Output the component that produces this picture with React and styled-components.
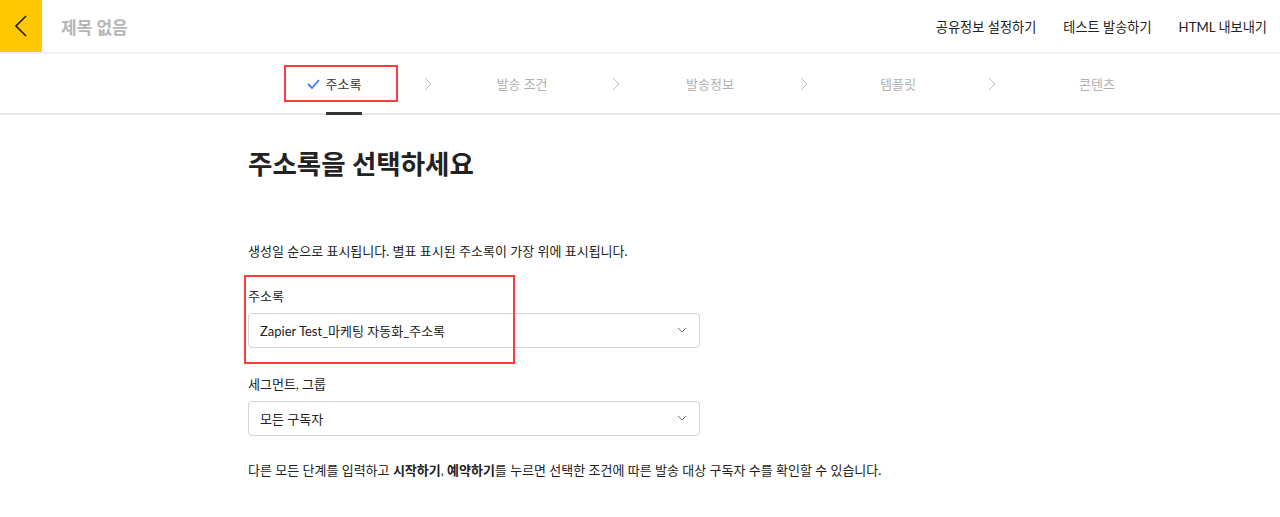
import React from 'react';
import styled, { createGlobalStyle } from 'styled-components';

const GlobalStyle = createGlobalStyle`
  body {
    margin: 0;
    background: #fff;
    font-family: Lato, "Noto Sans CJK KR", sans-serif;
    color: #222;
  }
`;

const Page = styled.div`
  width: 1280px;
  height: 517px;
  overflow: hidden;
  position: relative;
`;

const Header = styled.header`
  display: flex;
  align-items: center;
  height: 52px;
  border-bottom: 2px solid #f1f1f6;
`;

const BackButton = styled.div`
  width: 42px;
  height: 52px;
  background: #ffc800;
  display: flex;
  align-items: center;
  justify-content: center;
`;

const DocTitle = styled.div`
  margin-left: 19px;
  font-size: 17px;
  font-weight: 700;
  color: #b5b5b8;
  flex: 1;
`;

const HeaderLinks = styled.nav`
  display: flex;
  gap: 27px;
  padding-right: 13px;
  font-size: 13.2px;
  color: #222;
`;

const StepBar = styled.div`
  display: flex;
  align-items: stretch;
  height: 59px;
  padding-left: 249px;
  border-bottom: 2px solid #e8e8e8;
`;

const Step = styled.div`
  width: ${(p) => p.$w}px;
  display: flex;
  align-items: center;
  justify-content: center;
  gap: 6px;
  font-size: 13px;
  color: ${(p) => (p.$active ? '#333' : '#b0b0b3')};
  position: relative;
`;

const Underline = styled.span`
  position: absolute;
  bottom: -2px;
  left: 77px;
  width: 36px;
  height: 3px;
  background: #333;
`;

const Sep = styled.div`
  width: 18px;
  display: flex;
  align-items: center;
  justify-content: center;
`;

const Main = styled.main`
  padding-left: 248px;
  width: 452px;
`;

const Title = styled.h1`
  margin: 34px 0 0;
  font-size: 26.5px;
  font-weight: 700;
  line-height: 1.2;
  color: #222;
`;

const Desc = styled.p`
  margin: 60px 0 0;
  font-size: 13px;
  line-height: 20px;
  color: #222;
`;

const Field = styled.div`
  margin-top: ${(p) => p.$top}px;
`;

const Label = styled.div`
  font-size: 13px;
  line-height: 20px;
  margin-bottom: 7px;
`;

const Select = styled.div`
  height: 35px;
  border: 1px solid #d4d4d8;
  border-radius: 4px;
  display: flex;
  align-items: center;
  justify-content: space-between;
  padding: 0 12px 0 11px;
  font-size: 13px;
  box-sizing: border-box;
`;

const Note = styled.p`
  margin: 24px 0 0;
  font-size: 13px;
  line-height: 20px;
  white-space: nowrap;
  b {
    font-weight: 700;
  }
`;

const Mark = styled.div`
  position: absolute;
  border: 2px solid #ff3b3b;
  box-sizing: border-box;
  left: ${(p) => p.$x}px;
  top: ${(p) => p.$y}px;
  width: ${(p) => p.$w}px;
  height: ${(p) => p.$h}px;
  pointer-events: none;
`;

const Chevron = () => (
  <svg width="8" height="14" viewBox="0 0 8 14" fill="none">
    <path d="M1 1l6 6-6 6" stroke="#bdbdc0" strokeWidth="1" />
  </svg>
);

const Down = () => (
  <svg width="10" height="6" viewBox="0 0 10 6" fill="none">
    <path d="M1 1l4 4 4-4" stroke="#777" strokeWidth="1" />
  </svg>
);

const steps = ['주소록', '발송 조건', '발송정보', '템플릿', '콘텐츠'];

export default function App() {
  return (
    <Page>
      <GlobalStyle />
      <Header>
        <BackButton>
          <svg width="12" height="22" viewBox="0 0 12 22" fill="none">
            <path d="M11 1L1 11l10 10" stroke="#222" strokeWidth="1.6" />
          </svg>
        </BackButton>
        <DocTitle>제목 없음</DocTitle>
        <HeaderLinks>
          <span>공유정보 설정하기</span>
          <span>테스트 발송하기</span>
          <span>HTML 내보내기</span>
        </HeaderLinks>
      </Header>
      <StepBar>
        {steps.map((s, i) => (
          <React.Fragment key={s}>
            <Step $active={i === 0} $w={i === steps.length - 1 ? 192 : 170}>
              {i === 0 && (
                <svg width="13" height="10" viewBox="0 0 13 10" fill="none">
                  <path d="M1 5l4 4 7-8" stroke="#3b82f6" strokeWidth="1.8" />
                </svg>
              )}
              {s}
              {i === 0 && <Underline />}
            </Step>
            {i < steps.length - 1 && (
              <Sep>
                <Chevron />
              </Sep>
            )}
          </React.Fragment>
        ))}
      </StepBar>
      <Main>
        <Title>주소록을 선택하세요</Title>
        <Desc>생성일 순으로 표시됩니다. 별표 표시된 주소록이 가장 위에 표시됩니다.</Desc>
        <Field $top={25}>
          <Label>주소록</Label>
          <Select>
            <span>Zapier Test_마케팅 자동화_주소록</span>
            <Down />
          </Select>
        </Field>
        <Field $top={26}>
          <Label>세그먼트, 그룹</Label>
          <Select>
            <span>모든 구독자</span>
            <Down />
          </Select>
        </Field>
        <Note>
          다른 모든 단계를 입력하고 <b>시작하기</b>, <b>예약하기</b>를 누르면 선택한 조건에 따른 발송 대상 구독자 수를 확인할 수 있습니다.
        </Note>
      </Main>
      <Mark $x={284} $y={65} $w={114} $h={37} />
      <Mark $x={244} $y={275} $w={271} $h={89} />
    </Page>
  );
}
